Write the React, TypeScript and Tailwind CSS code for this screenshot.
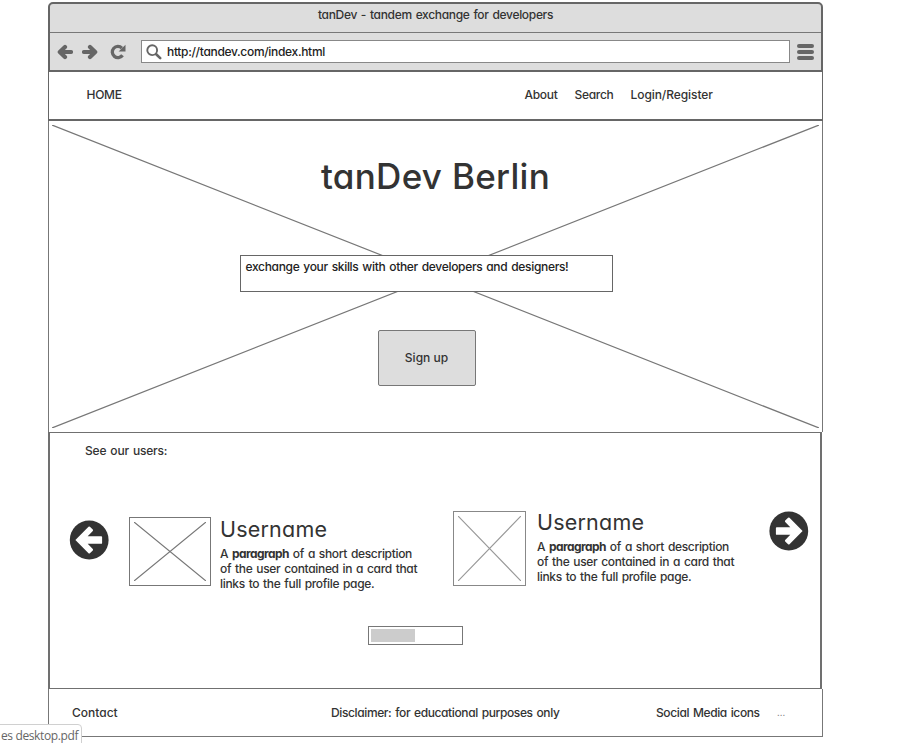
import React from "react";

function Crossed({ className, inset, stroke = "#777777" }: { className: string; inset: string; stroke?: string }) {
  return (
    <div className={className}>
      <svg className={inset} viewBox="0 0 100 100" preserveAspectRatio="none" fill="none" stroke={stroke}>
        <path d="M0 0L100 100M100 0L0 100" vectorEffect="non-scaling-stroke" strokeWidth="1.2" />
      </svg>
    </div>
  );
}

function BarArrow({ flip = false }: { flip?: boolean }) {
  return (
    <svg width="16" height="16" viewBox="0 0 16 16" className={flip ? "-scale-x-100" : ""}>
      <path d="M8 2.9L2.8 8L8 13.1M3.4 8H14" fill="none" stroke="#666666" strokeWidth="4.2" strokeLinecap="round" strokeLinejoin="round" />
    </svg>
  );
}

function CircleArrow({ flip = false }: { flip?: boolean }) {
  return (
    <svg width="40" height="40" viewBox="0 0 40 40" className={flip ? "-scale-x-100" : ""}>
      <circle cx="20.2" cy="20" r="19.4" fill="#333333" />
      <path d="M6.4 20L19.5 6.7Q20.2 6.1 20.9 6.7L23.8 9.6Q24.4 10.3 23.8 11L18.7 16.2H32.2Q33.1 16.2 33.1 17.1V22.9Q33.1 23.8 32.2 23.8H18.7L23.8 29Q24.4 29.7 23.8 30.4L20.9 33.3Q20.2 33.9 19.5 33.3Z" fill="#ffffff" />
    </svg>
  );
}

function UserText() {
  return (
    <div>
      <h2 className="h-[30px] text-[21.5px] font-normal leading-[30px] tracking-[0.2px]">Username</h2>
      <p className="mt-[2px] text-[12px] leading-[15px] tracking-[-0.33px] [word-spacing:1px]">
        A <b className="font-bold tracking-[-0.57px]">paragraph</b> of a short description
        <br />
        of the user contained in a card that
        <br />
        links to the full profile page.
      </p>
    </div>
  );
}

export default function App() {
  return (
    <div className="relative h-[743px] w-[900px] overflow-hidden bg-white pl-[48px] pt-[2px] font-['Inter','Liberation_Sans',sans-serif] text-[12px] font-[450] leading-[16px] text-[#333333] [font-feature-settings:'cv11','ss03']">
      <div className="flex h-[735px] w-[775px] flex-col">
        <header className="h-[70px] rounded-t-[5px] border-2 border-[#666666] bg-[#dddddd]">
          <div className="flex h-[29px] items-start justify-center border-b border-[#777777] pt-[3px]">
            <span className="tracking-[-0.32px] [word-spacing:1px]">tanDev - tandem exchange for developers</span>
          </div>
          <div className="flex h-[37px] items-center pl-[7px]">
            <BarArrow />
            <div className="ml-[9px] flex"><BarArrow flip /></div>
            <svg className="ml-[12px]" width="16" height="16" viewBox="0 0 16 16">
              <path d="M12.5 11.2A5.6 5.6 0 1 1 11.9 4.1" fill="none" stroke="#666666" strokeWidth="3.3" />
              <path d="M15.5 0.8V7.4H8.6Z" fill="#666666" />
            </svg>
            <div className="ml-[15px] flex h-[23px] w-[649px] items-center border border-[#888888] bg-white pl-[4px]">
              <svg width="16" height="16" viewBox="0 0 16 16" fill="none" stroke="#666666" strokeLinecap="round">
                <circle cx="6.2" cy="6.2" r="4.9" strokeWidth="1.9" />
                <path d="M10.2 10.2L14.2 14.1" strokeWidth="2.6" />
              </svg>
              <span className="ml-[5px] tracking-[-0.32px] text-[#222222]">http://tandev.com/index.html</span>
            </div>
            <div className="ml-[7px] flex flex-col gap-[2px]">
              <i className="h-[4px] w-[17px] rounded-full bg-[#666666]" />
              <i className="h-[4px] w-[17px] rounded-full bg-[#666666]" />
              <i className="h-[4px] w-[17px] rounded-full bg-[#666666]" />
            </div>
          </div>
        </header>

        <nav className="flex h-[49px] items-center border-x border-b-2 border-[#666666] pb-[2px] pl-[37.5px]">
          <span className="w-[438px] tracking-[-0.3px]">HOME</span>
          <span className="w-[50px] tracking-[-0.3px]">About</span>
          <span className="w-[56px] tracking-[-0.3px]">Search</span>
          <span className="tracking-[-0.07px]">Login/Register</span>
        </nav>

        <section className="relative h-[311px] border-x border-[#777777]">
          <Crossed className="absolute inset-0 flex px-[3px] pt-[4px] pb-[4px]" inset="h-full w-full" />
          <div className="relative flex flex-col items-center pr-[18px]">
            <h1 className="mt-[31px] ml-[18px] h-[48px] text-[35px] font-medium leading-[48px] tracking-[0.3px]">tanDev Berlin</h1>
            <div className="mt-[55px] ml-[-1px] h-[37px] w-[373px] border border-[#666666] bg-white pt-[3px] pl-[5px] tracking-[-0.32px] text-[#222222] [word-spacing:1px]">
              exchange your skills with other developers and designers!
            </div>
            <button className="mt-[38px] h-[56px] w-[98px] rounded-[2px] border border-[#777777] bg-[#dddddd] pb-px">Sign up</button>
          </div>
        </section>

        <section className="mr-px h-[257px] border-t border-r-2 border-b border-l-2 border-[#707070]">
          <div className="pt-[10px] pl-[35px] tracking-[-0.18px] [word-spacing:1px]">See our users:</div>
          <div className="mt-[52px] flex h-[82px] items-start pl-[19px]">
            <div className="mt-[9px]"><CircleArrow /></div>
            <Crossed className="mt-[6px] ml-[20px] flex h-[69px] w-[82px] border border-[#777777] p-[4px]" inset="h-full w-full" />
            <div className="mt-[3px] ml-[9px] w-[233px]"><UserText /></div>
            <Crossed className="flex h-[75px] w-[73px] border border-[#888888] p-[4px]" inset="h-full w-full" stroke="#999999" />
            <div className="mt-[-4px] ml-[11px] w-[232px]"><UserText /></div>
            <CircleArrow flip />
          </div>
          <div className="mt-[33px] ml-[318px] h-[19px] w-[95px] border border-[#777777] p-[2px]">
            <div className="h-full w-[44px] bg-[#cccccc]" />
          </div>
        </section>

        <footer className="flex h-[48px] items-center border-x border-b border-[#777777] pl-[23px]">
          <span className="w-[259px]">Contact</span>
          <span className="w-[325px] tracking-[-0.38px] [word-spacing:1px]">Disclaimer: for educational purposes only</span>
          <span className="w-[121px] tracking-[-0.38px] [word-spacing:1px]">Social Media icons</span>
          <span className="text-[9px] text-[#777777]">...</span>
        </footer>
      </div>
      <div className="absolute bottom-[-1px] left-[-1px] h-[20px] w-[83px] whitespace-nowrap rounded-tr-[4px] border border-[#d0d0d0] bg-white pt-[3px] pl-px font-['Open_Sans','Noto_Sans',sans-serif] text-[12px] font-normal leading-[16px] tracking-[-0.38px] text-[#666666]">es desktop.pdf</div>
    </div>
  );
}
